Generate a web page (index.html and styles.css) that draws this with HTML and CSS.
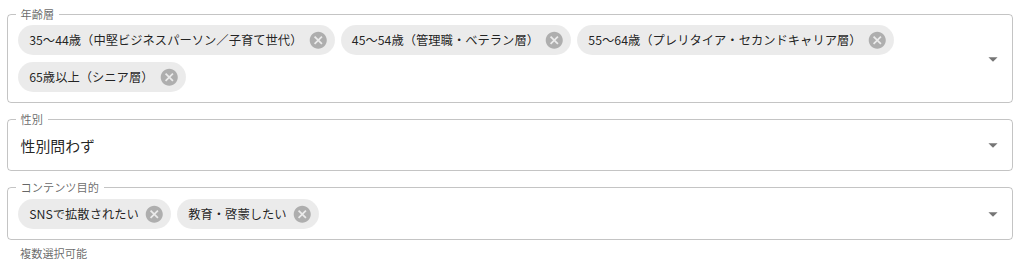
FILE: index.html
```html
<!DOCTYPE html>
<html lang="ja">
<head>
<meta charset="utf-8">
<title>ターゲット設定</title>
<link rel="stylesheet" href="styles.css">
</head>
<body>
<div class="form">
  <div class="field field-multi">
    <span class="label">年齢層</span>
    <div class="chips">
      <span class="chip"><span class="chip-text">35〜44歳（中堅ビジネスパーソン／子育て世代）</span><svg class="chip-del" viewBox="0 0 24 24"><path d="M12 2C6.47 2 2 6.47 2 12s4.47 10 10 10 10-4.47 10-10S17.53 2 12 2zm5 13.59L15.59 17 12 13.41 8.41 17 7 15.59 10.59 12 7 8.41 8.41 7 12 10.59 15.59 7 17 8.41 13.41 12 17 15.59z"/></svg></span>
      <span class="chip"><span class="chip-text">45〜54歳（管理職・ベテラン層）</span><svg class="chip-del" viewBox="0 0 24 24"><path d="M12 2C6.47 2 2 6.47 2 12s4.47 10 10 10 10-4.47 10-10S17.53 2 12 2zm5 13.59L15.59 17 12 13.41 8.41 17 7 15.59 10.59 12 7 8.41 8.41 7 12 10.59 15.59 7 17 8.41 13.41 12 17 15.59z"/></svg></span>
      <span class="chip"><span class="chip-text">55〜64歳（プレリタイア・セカンドキャリア層）</span><svg class="chip-del" viewBox="0 0 24 24"><path d="M12 2C6.47 2 2 6.47 2 12s4.47 10 10 10 10-4.47 10-10S17.53 2 12 2zm5 13.59L15.59 17 12 13.41 8.41 17 7 15.59 10.59 12 7 8.41 8.41 7 12 10.59 15.59 7 17 8.41 13.41 12 17 15.59z"/></svg></span>
      <span class="chip"><span class="chip-text">65歳以上（シニア層）</span><svg class="chip-del" viewBox="0 0 24 24"><path d="M12 2C6.47 2 2 6.47 2 12s4.47 10 10 10 10-4.47 10-10S17.53 2 12 2zm5 13.59L15.59 17 12 13.41 8.41 17 7 15.59 10.59 12 7 8.41 8.41 7 12 10.59 15.59 7 17 8.41 13.41 12 17 15.59z"/></svg></span>
    </div>
    <svg class="arrow" viewBox="0 0 24 24"><path d="M7 10l5 5 5-5z"/></svg>
  </div>

  <div class="field field-single">
    <span class="label">性別</span>
    <div class="value">性別問わず</div>
    <svg class="arrow" viewBox="0 0 24 24"><path d="M7 10l5 5 5-5z"/></svg>
  </div>

  <div class="group">
    <div class="field field-multi field-purpose">
      <span class="label">コンテンツ目的</span>
      <div class="chips">
        <span class="chip"><span class="chip-text">SNSで拡散されたい</span><svg class="chip-del" viewBox="0 0 24 24"><path d="M12 2C6.47 2 2 6.47 2 12s4.47 10 10 10 10-4.47 10-10S17.53 2 12 2zm5 13.59L15.59 17 12 13.41 8.41 17 7 15.59 10.59 12 7 8.41 8.41 7 12 10.59 15.59 7 17 8.41 13.41 12 17 15.59z"/></svg></span>
        <span class="chip"><span class="chip-text">教育・啓蒙したい</span><svg class="chip-del" viewBox="0 0 24 24"><path d="M12 2C6.47 2 2 6.47 2 12s4.47 10 10 10 10-4.47 10-10S17.53 2 12 2zm5 13.59L15.59 17 12 13.41 8.41 17 7 15.59 10.59 12 7 8.41 8.41 7 12 10.59 15.59 7 17 8.41 13.41 12 17 15.59z"/></svg></span>
      </div>
      <svg class="arrow" viewBox="0 0 24 24"><path d="M7 10l5 5 5-5z"/></svg>
    </div>
    <div class="helper">複数選択可能</div>
  </div>
</div>
</body>
</html>
```

FILE: styles.css
```css
html, body {
  margin: 0;
  padding: 0;
  background: #ffffff;
}

body {
  font-family: "Noto Sans CJK JP", "Noto Sans", sans-serif;
  color: rgba(0, 0, 0, 0.87);
}

.form {
  display: flex;
  flex-direction: column;
  gap: 16px;
  padding: 14px 11px 0 7px;
}

.field {
  position: relative;
  display: flex;
  align-items: center;
  border: 1px solid rgba(0, 0, 0, 0.23);
  border-radius: 4px;
  box-sizing: border-box;
}

.label {
  position: absolute;
  top: -8px;
  left: 8px;
  padding: 0 4.6px;
  background: #ffffff;
  font-size: 11.2px;
  line-height: 14px;
  color: rgba(0, 0, 0, 0.6);
  white-space: nowrap;
}

.field-multi {
  padding: 10px 0 10px 10px;
}

.field-purpose {
  padding-top: 11px;
}

.field-single {
  height: 52px;
  padding-left: 12.5px;
}

.chips {
  flex: 1;
  display: flex;
  flex-wrap: wrap;
  gap: 7px 6px;
  padding-right: 12px;
}

.chip {
  display: inline-flex;
  align-items: center;
  height: 30px;
  border-radius: 15px;
  background: rgba(0, 0, 0, 0.08);
  font-size: 12.3px;
  white-space: nowrap;
}

.chip-text {
  padding: 0 11.2px;
  line-height: 30px;
}

.chip-del {
  width: 20.5px;
  height: 20.5px;
  margin: 0 6.5px 0 -6px;
  fill: rgba(0, 0, 0, 0.26);
}

.value {
  flex: 1;
  font-size: 14.9px;
  line-height: 20px;
  padding-top: 1px;
}

.arrow {
  width: 22px;
  height: 22px;
  margin-right: 8px;
  flex: none;
  fill: rgba(0, 0, 0, 0.54);
}

.group {
  display: flex;
  flex-direction: column;
}

.helper {
  margin-top: 4px;
  padding-left: 13px;
  font-size: 11.2px;
  line-height: 18px;
  color: rgba(0, 0, 0, 0.6);
}
```
